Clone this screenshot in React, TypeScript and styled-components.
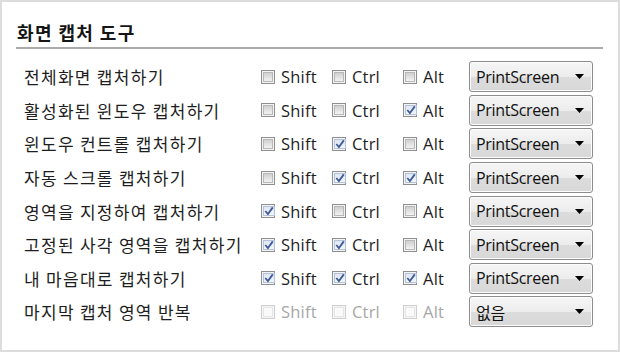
import React from 'react'
import styled, { createGlobalStyle } from 'styled-components'

const GlobalStyle = createGlobalStyle`
    html, body {
        margin: 0;
        padding: 0;
        background: #ffffff;
    }
`

const StyledFrame = styled.div`
    width: 620px;
    height: 352px;
    box-sizing: border-box;
    border: 2px solid #dcdcdc;
    padding: 15px 15px 0 14px;
    font-family: "Open Sans", "Noto Sans CJK KR", sans-serif;
    color: #1e1e1e;
    display: flex;
    flex-direction: column;
`

const StyledTitle = styled.div`
    font-family: "Noto Sans CJK KR", sans-serif;
    font-weight: 700;
    font-size: 18px;
    letter-spacing: 1.4px;
    line-height: 30px;
    padding-left: 1px;
    color: #151515;
    border-bottom: 2px solid #a9a9a9;
`

const StyledList = styled.div`
    display: flex;
    flex-direction: column;
    padding-top: 11px;
`

const StyledRow = styled.div`
    display: grid;
    grid-template-columns: 245px 71px 71px 66px 124px;
    align-items: center;
    height: 33.6px;
`

const StyledLabel = styled.div`
    font-family: "Noto Sans CJK KR", sans-serif;
    font-size: 17px;
    letter-spacing: 1.3px;
    padding-left: 8px;
    color: #1e1e1e;
`

const StyledCheck = styled.label<{ disabled?: boolean }>`
    display: flex;
    align-items: center;
    gap: 6px;
    font-size: 16.5px;
    letter-spacing: 0.2px;
    color: ${props => props.disabled ? '#a6a6a6' : '#1e1e1e'};
`

const StyledBox = styled.span<{ checked?: boolean, disabled?: boolean }>`
    width: 14px;
    height: 14px;
    box-sizing: border-box;
    border: 1px solid ${props => props.disabled ? '#cfcfcf' : '#8e8f8f'};
    padding: 1px;
    display: flex;
    background: #f4f4f4;

    & > span {
        flex: 1;
        display: flex;
        align-items: center;
        justify-content: center;
        border: 1px solid ${props => props.disabled ? '#e6e6e6' : props.checked ? '#b4c3dc' : '#b8b8b8'};
        background: ${props => props.disabled
            ? '#fafafa'
            : props.checked
                ? 'linear-gradient(#dfe7f4, #f2f6fb)'
                : 'linear-gradient(#d0d0d0, #f2f2f2)'};
    }
`

const StyledSelect = styled.div`
    height: 31px;
    box-sizing: border-box;
    border: 1px solid #8d8d8d;
    border-radius: 3px;
    background: linear-gradient(#f6f6f6 0%, #ececec 50%, #dcdcdc 51%, #d8d8d8 100%);
    box-shadow: inset 0 0 0 1px #fcfcfc;
    display: flex;
    align-items: center;
    justify-content: space-between;
    padding: 0 8px 0 6px;
    font-size: 16px;
    color: #111;
`

const StyledSelectText = styled.span`
    font-family: "Open Sans", "Noto Sans CJK KR", sans-serif;
    letter-spacing: -0.3px;
`

type Shortcut = {
    name: string
    shift: boolean
    ctrl: boolean
    alt: boolean
    key: string
    disabled?: boolean
}

const shortcuts: Shortcut[] = [
    { name: '전체화면 캡처하기', shift: false, ctrl: false, alt: false, key: 'PrintScreen' },
    { name: '활성화된 윈도우 캡처하기', shift: false, ctrl: false, alt: true, key: 'PrintScreen' },
    { name: '윈도우 컨트롤 캡처하기', shift: false, ctrl: true, alt: false, key: 'PrintScreen' },
    { name: '자동 스크롤 캡처하기', shift: false, ctrl: true, alt: true, key: 'PrintScreen' },
    { name: '영역을 지정하여 캡처하기', shift: true, ctrl: false, alt: false, key: 'PrintScreen' },
    { name: '고정된 사각 영역을 캡처하기', shift: true, ctrl: true, alt: false, key: 'PrintScreen' },
    { name: '내 마음대로 캡처하기', shift: true, ctrl: true, alt: true, key: 'PrintScreen' },
    { name: '마지막 캡처 영역 반복', shift: false, ctrl: false, alt: false, key: '없음', disabled: true },
]

const Check = ({ label, checked, disabled }: { label: string, checked: boolean, disabled?: boolean }) => (
    <StyledCheck disabled={disabled}>
        <StyledBox checked={checked} disabled={disabled}>
            <span>
                {checked && (
                    <svg width="10" height="10" viewBox="0 0 10 10">
                        <path d="M1.3 5 L3.9 8 L8.8 1.4" fill="none" stroke="#3e5a96" strokeWidth="1.8" />
                    </svg>
                )}
            </span>
        </StyledBox>
        {label}
    </StyledCheck>
)

const App = () => {
    return (<>
        <GlobalStyle />
        <StyledFrame>
            <StyledTitle>화면 캡처 도구</StyledTitle>
            <StyledList>
                {
                    shortcuts.map(s => (
                        <StyledRow key={s.name}>
                            <StyledLabel>{s.name}</StyledLabel>
                            <Check label="Shift" checked={s.shift} disabled={s.disabled} />
                            <Check label="Ctrl" checked={s.ctrl} disabled={s.disabled} />
                            <Check label="Alt" checked={s.alt} disabled={s.disabled} />
                            <StyledSelect>
                                <StyledSelectText>{s.key}</StyledSelectText>
                                <svg width="9" height="5" viewBox="0 0 9 5">
                                    <path d="M0 0 H9 L4.5 5 Z" fill="#000" />
                                </svg>
                            </StyledSelect>
                        </StyledRow>
                    ))
                }
            </StyledList>
        </StyledFrame>
    </>)
}

export default App
